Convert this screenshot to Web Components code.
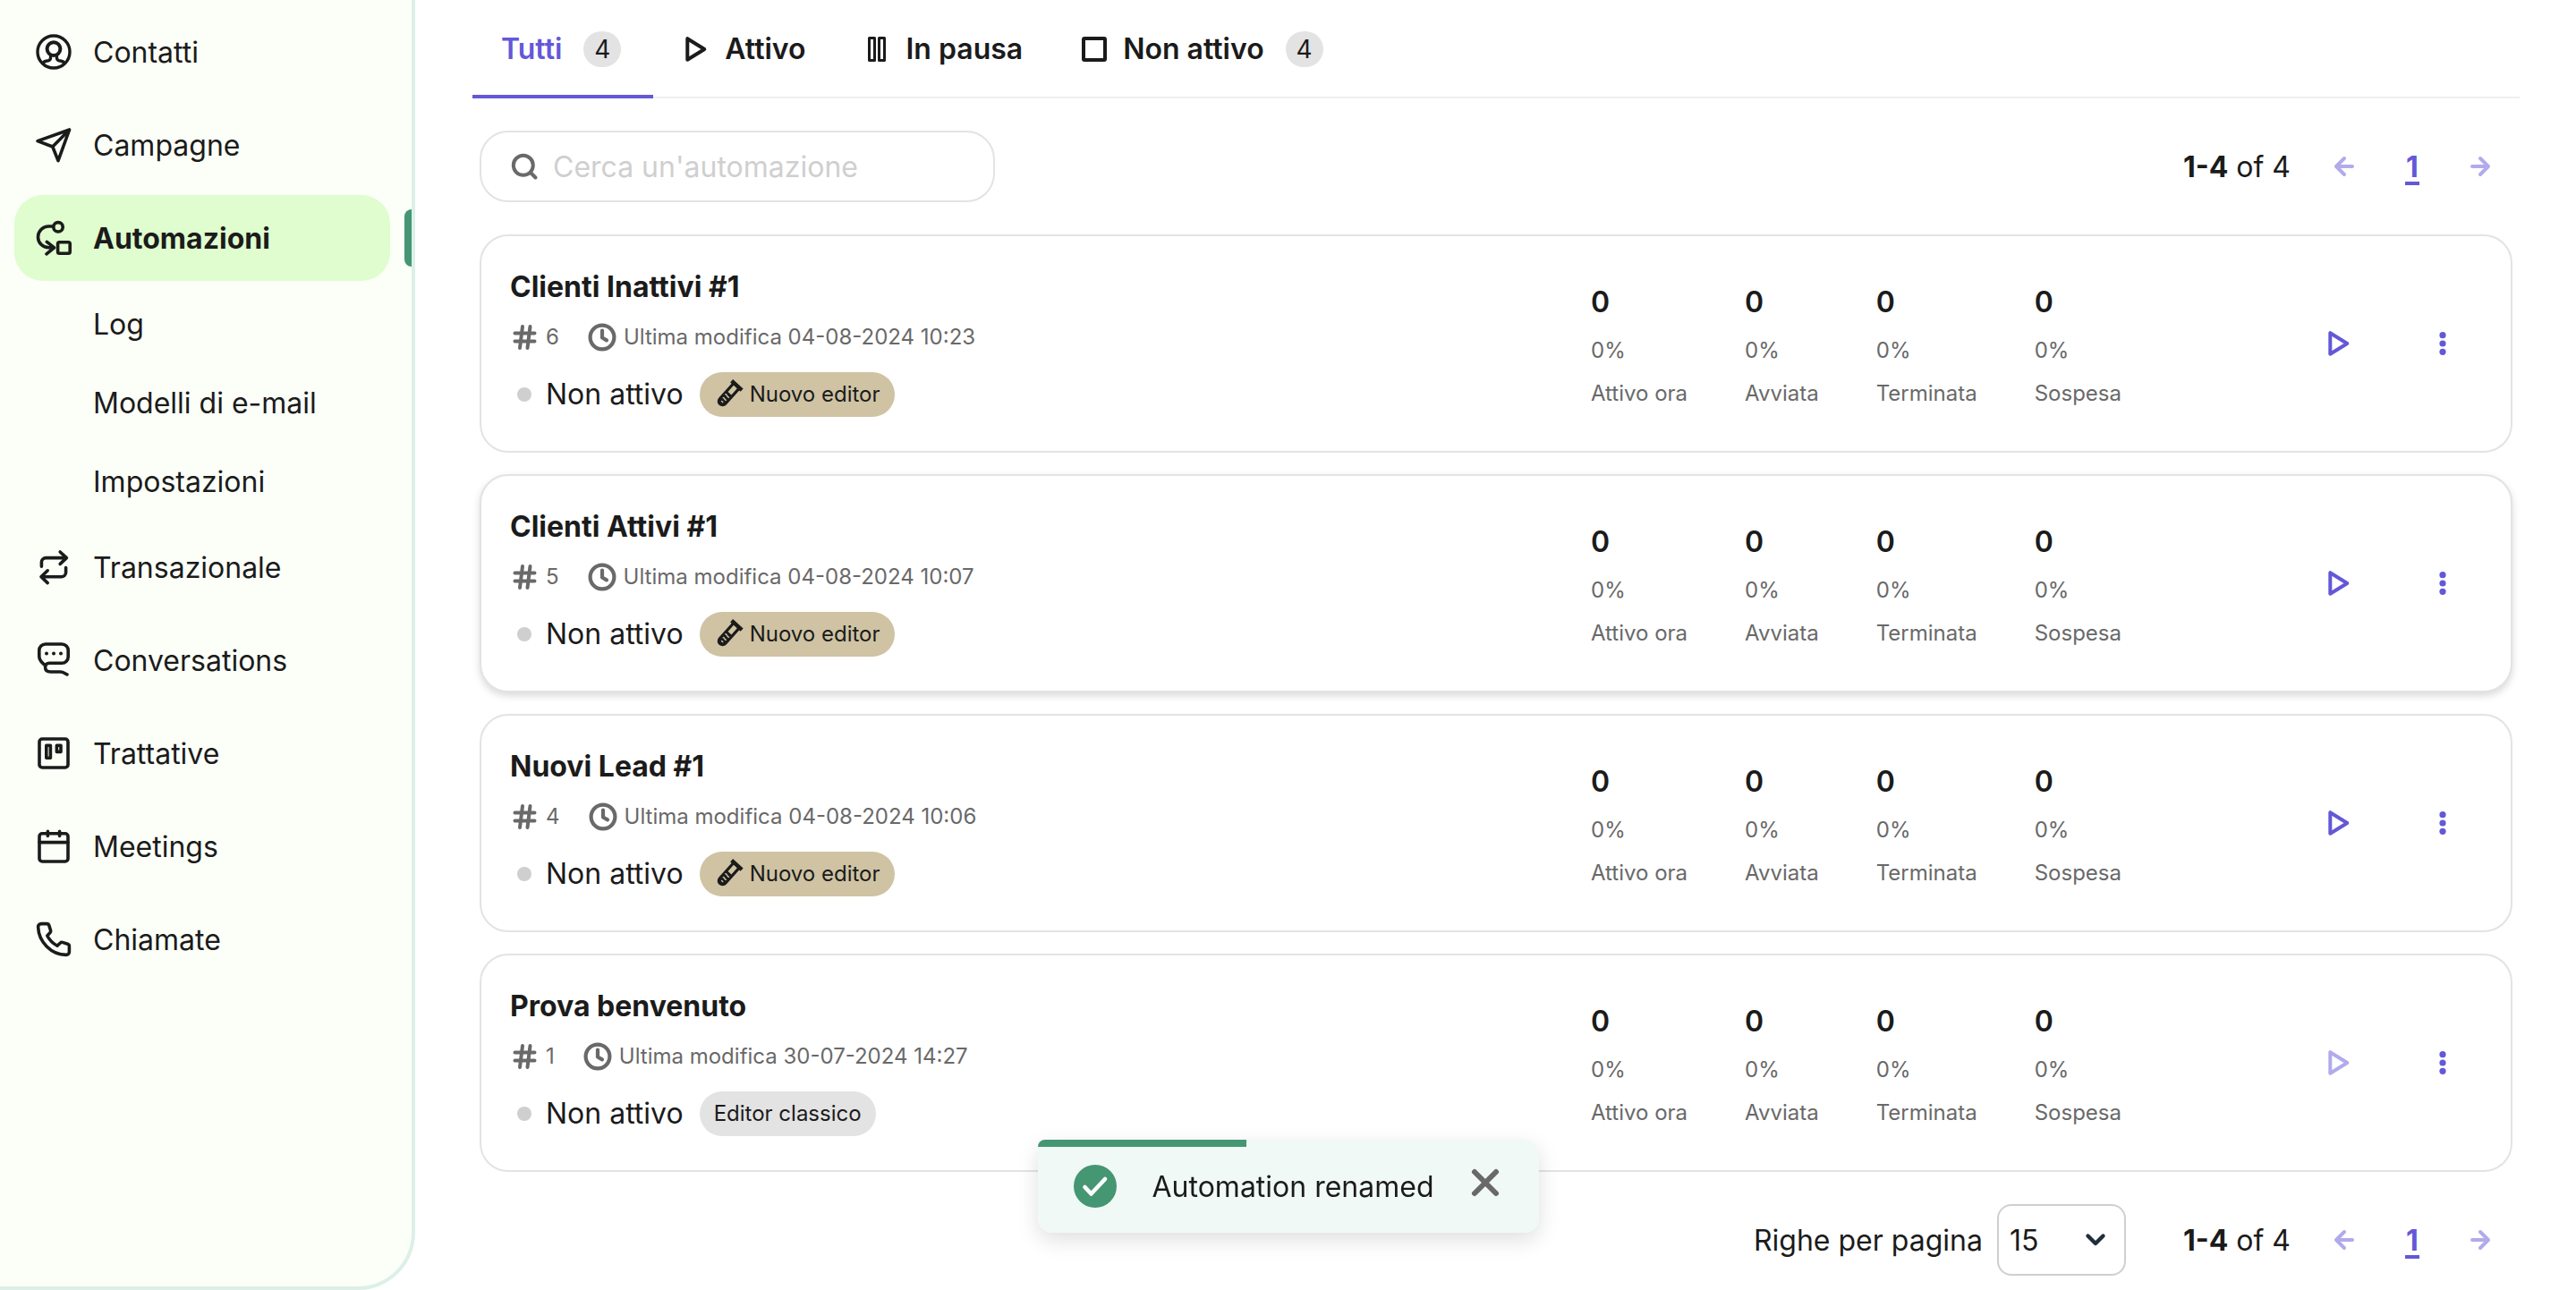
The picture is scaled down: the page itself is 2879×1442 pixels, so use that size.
<!DOCTYPE html>
<html lang="it">
<head>
<meta charset="utf-8">
<title>Automazioni</title>
<style>
  html, body { margin: 0; }
  body { font-family: Inter, "Liberation Sans", sans-serif; font-size: 32px; line-height: 40px; color: #1b1b1b; background: #fff; }
</style>
</head>
<body>
<automation-app></automation-app>
<script>
const ICONS = {
  user: '<g stroke-width="1.7"><circle cx="12" cy="12" r="9"/><circle cx="12" cy="10.3" r="3.7" stroke-width="2"/><path d="M5.9 18.3c1-1.5 2.3-1.1 3.4-1.5 1-.4 1-1 1-2.9M18.1 18.3c-1-1.5-2.3-1.1-3.4-1.5-1-.4-1-1-1-2.9"/></g>',
  send: '<path stroke-width="1.8" d="M3 9.800 20.800 3.500 14.500 20.800 11.400 13zM11.400 13l9.400-9.500"/>',
  flow: '<g stroke-width="1.8"><circle cx="14.5" cy="5.9" r="2.6"/><rect x="14.3" y="14.4" width="6.8" height="6.2" rx=".9"/><path d="M11.6 5.5H9.2a5.95 5.95 0 0 0 0 11.9h3M8.2 14.2l4.100 3.200L8 20.900"/></g>',
  repeat: '<path stroke-width="1.8" d="M5.200 11.600V9.300a2.500 2.500 0 0 1 2.500-2.500H19M15.600 3.500l3.600 3.300-3.600 3.400M18.800 12.300v2.600a2.500 2.500 0 0 1-2.500 2.500H5M8.600 13.900 5 17.400l3.600 3.400"/>',
  chat: '<g stroke-width="1.8"><path d="M7.300 15C5.600 13.200 3.900 12.800 3.900 9.800V6.500A3.500 3.500 0 0 1 7.400 3h9.200a3.500 3.500 0 0 1 3.500 3.500v3.600a3.500 3.500 0 0 1-3.500 3.500H9.600c-1.600 0-2.300.8-2.300 2.400 0 1.600 1 2.500 3 2.500h5.400c1.800 0 2.400.9 3.800 1.500"/><path stroke-width="2" d="M8 8.300h.01M12 8.300h.01M16 8.300h.01"/></g>',
  board: '<g stroke-width="1.8"><rect x="4" y="4" width="16" height="16" rx="1.600"/><rect x="7.900" y="7.600" width="2.300" height="7"/><rect x="13.700" y="7.600" width="2.300" height="3.600"/></g>',
  calendar: '<g stroke-width="1.8"><rect x="4" y="4.900" width="16" height="15.600" rx="1.600"/><path d="M4 9.800h16M8.700 3.600v2.600M15.300 3.600v2.600"/></g>',
  phone: '<path stroke-width="1.8" d="M5 3.300h3.200c.6 0 1 .3 1.200.9l.9 2.900c.1.400 0 .9-.3 1.200L8.400 10c1.300 2.500 3.100 4.300 5.600 5.600l1.700-1.600c.3-.3.800-.4 1.200-.3l2.900.9c.6.200.9.600.9 1.200V19c0 1-.8 1.700-1.700 1.700C10.500 20.500 3.600 13.500 3.300 5c0-.9.800-1.700 1.700-1.700z"/>',
  play: '<path stroke-width="4" d="M6.300 4.200v23.600L25.300 16z"/>',
  pause: '<g stroke-width="3"><rect x="7.500" y="3.500" width="6" height="25"/><rect x="18.500" y="3.500" width="6" height="25"/></g>',
  square: '<rect x="4" y="4" width="24" height="24" rx="1" stroke-width="4"/>',
  search: '<g stroke-width="4"><circle cx="14.800" cy="14.800" r="11"/><path d="m23 23 5.500 5.500"/></g>',
  hash: '<path stroke-width="4" d="M5.500 11.500h22M5.500 20.500h22M14 4l-3 24M22.500 4l-3 24"/>',
  clock: '<g stroke-width="4.200"><circle cx="16" cy="16" r="13.400"/><path d="M16 8.500v8l5 2.800"/></g>',
  left: '<path stroke-width="4" d="M25 16H7M16 7l-9 9 9 9"/>',
  right: '<path stroke-width="4" d="M7 16h18M16 7l9 9-9 9"/>',
  down: '<path stroke-width="4.400" d="m7.500 11.500 8.500 8.500 8.500-8.500"/>',
  dots: '<g fill="currentColor" stroke="none"><circle cx="16" cy="6.700" r="3.600"/><circle cx="16" cy="16" r="3.600"/><circle cx="16" cy="25.300" r="3.600"/></g>',
  close: '<path stroke-width="6" d="m4 4 24 24M28 4 4 28"/>',
  check: '<path stroke-width="4.600" d="M4.500 17l7 7.500L27 8"/>',
  tube: '<g transform="rotate(42 16 16)" stroke="none"><path fill="currentColor" fill-rule="evenodd" d="M8.500 0h15.500v4.500h-2V26a5.700 5.700 0 0 1-11.500 0V4.500h-2zM13.600 4.500V14h5.200V4.500z"/><path fill="none" stroke="#cfc3a3" stroke-width="1.500" d="M13.500 18c1.500-1.500 3 1.500 5 0M14.200 22.500c1.200-1.300 2.400 1.200 4 0M15.500 26.500h1.500"/></g>'
};
const BOX = { user: 24, send: 24, flow: 24, repeat: 24, chat: 24, board: 24, calendar: 24, phone: 24 };

function define(name, css, render) {
  customElements.define(name, class extends HTMLElement {
    connectedCallback() {
      if (this.shadowRoot) return;
      this.attachShadow({ mode: 'open' }).innerHTML =
        '<style>*{box-sizing:border-box}button,input,select{font:inherit;color:inherit}button{background:none;border:0;padding:0;cursor:pointer}' + css + '</style>' + render(this);
    }
  });
}

define('ui-icon',
  ':host{display:inline-flex;flex:none;width:32px;height:32px}svg{width:100%;height:100%;overflow:visible}',
  el => {
    const n = el.getAttribute('name'), b = BOX[n] || 32;
    return `<svg viewBox="0 0 ${b} ${b}" fill="none" stroke="currentColor" stroke-linecap="round" stroke-linejoin="round" aria-hidden="true">${ICONS[n]}</svg>`;
  });

define('nav-item', `
  :host{display:flex;align-items:center;height:96px;position:relative;margin:0 24px 0 16px}
  :host([sub]){height:80px}
  a{display:flex;flex:1;align-items:center;gap:20px;height:100%;padding:0 20px;border-radius:32px;color:inherit;text-decoration:none}
  :host([sub]) a{padding-left:88px}
  ui-icon{width:48px;height:48px}
  .text{padding-top:2px}
  :host([current]) a{background:#dffdce;font-weight:700}
  .mark{display:none;position:absolute;right:-24px;top:16px;bottom:16px;width:8px;border-radius:8px 0 0 8px;background:#459672}
  :host([current]) .mark{display:block}`,
  el => `<a href="#">${el.hasAttribute('icon') ? `<ui-icon name="${el.getAttribute('icon')}"></ui-icon>` : ''}<span class="text"><slot></slot></span></a><span class="mark"></span>`);

define('side-nav', `
  :host{display:block;flex:none;width:464px;background:#fbfff8;border:solid #dcefe8;border-width:0 4px 4px 0;border-bottom-right-radius:64px}
  nav{display:flex;flex-direction:column;gap:8px;padding-top:10px}`,
  () => `<nav aria-label="Menu">
    <nav-item icon="user">Contatti</nav-item>
    <nav-item icon="send">Campagne</nav-item>
    <nav-item icon="flow" current>Automazioni</nav-item>
    <nav-item sub>Log</nav-item>
    <nav-item sub>Modelli di e-mail</nav-item>
    <nav-item sub>Impostazioni</nav-item>
    <nav-item icon="repeat">Transazionale</nav-item>
    <nav-item icon="chat">Conversations</nav-item>
    <nav-item icon="board">Trattative</nav-item>
    <nav-item icon="calendar">Meetings</nav-item>
    <nav-item icon="phone">Chiamate</nav-item>
  </nav>`);

define('status-tab', `
  :host{display:block}
  button{display:flex;align-items:center;gap:16px;height:110px;padding:4px 32px 0;border-bottom:4px solid transparent;font-weight:600}
  :host([selected]) button{color:#6358d8;border-color:#6358d8}
  .count{display:flex;align-items:center;justify-content:center;width:42px;height:40px;margin:0 4px 0 8px;border-radius:20px;background:#e3e3e3;color:#1b1b1b;font-weight:400;font-size:28px}`,
  el => `<button type="button" role="tab" aria-selected="${el.hasAttribute('selected')}">${el.hasAttribute('icon') ? `<ui-icon name="${el.getAttribute('icon')}"></ui-icon>` : ''}<slot></slot>${el.hasAttribute('count') ? `<span class="count">${el.getAttribute('count')}</span>` : ''}</button>`);

define('status-tabs', `
  :host{display:block}
  div{display:flex;box-shadow:inset 0 -2px #efefef}`,
  () => `<div role="tablist">
    <status-tab selected count="4">Tutti</status-tab>
    <status-tab icon="play">Attivo</status-tab>
    <status-tab icon="pause">In pausa</status-tab>
    <status-tab icon="square" count="4">Non attivo</status-tab>
  </div>`);

define('search-box', `
  :host{display:block;width:576px}
  label{display:flex;align-items:center;gap:16px;height:80px;padding:0 32px;border:2px solid #e3e3e3;border-radius:32px}
  ui-icon{color:#696969}
  input{flex:1;min-width:0;border:0;outline:0;padding:2px 0 0;background:none}
  input::placeholder{color:#cfcfcf;opacity:1}`,
  () => `<label><ui-icon name="search"></ui-icon><input type="text" aria-label="Cerca un'automazione" placeholder="Cerca un'automazione"></label>`);

define('page-nav', `
  :host{display:flex;align-items:center;height:80px}
  p{margin:0 24px 0 0;padding-top:2px}
  b{font-weight:700}
  button{display:flex;justify-content:center;width:72px;color:#b1abec}
  a{padding:2px 32px 0;color:#6358d8;font-weight:700;text-decoration:none}
  a span{display:block;width:16px;height:40px;border-bottom:4px solid #6358d8;text-align:center}`,
  () => `<p><b>1-4</b> of 4</p>
    <button type="button" aria-label="Pagina precedente"><ui-icon name="left"></ui-icon></button>
    <a href="#"><span>1</span></a>
    <button type="button" aria-label="Pagina successiva"><ui-icon name="right"></ui-icon></button>`);

define('rows-select', `
  :host{display:flex;align-items:center;gap:16px}
  label{padding-top:2px}
  div{position:relative}
  select{display:block;width:144px;height:80px;padding:2px 12px 0;border:2px solid #cfcfcf;border-radius:16px;background:#fff;appearance:none}
  ui-icon{position:absolute;right:18px;top:24px;color:#1f2d3d;pointer-events:none}`,
  () => `<label for="rows">Righe per pagina</label><div><select id="rows"><option>15</option></select><ui-icon name="down"></ui-icon></div>`);

define('editor-badge', `
  :host{display:inline-flex;align-items:center;gap:8px;height:50px;padding:0 16px;border-radius:25px;background:#e3e3e3;font-size:24px}
  :host([beta]){background:#cfc3a3}`,
  el => (el.hasAttribute('beta') ? '<ui-icon name="tube"></ui-icon>' : '') + '<slot></slot>');

define('stat-cell', `
  :host{display:flex;flex-direction:column;font-size:24px;line-height:48px;color:#696969}
  strong{font-size:32px;line-height:64px;padding-top:2px;margin-bottom:-2px;font-weight:600;color:#1b1b1b}`,
  () => '<strong>0</strong><span>0%</span><slot></slot>');

define('automation-card', `
  :host{display:block}
  article{display:grid;grid-template-columns:minmax(0,1fr) 792px auto;align-items:center;height:244px;padding:0 32px;border:2px solid #e3e3e3;border-radius:32px;background:#fff}
  :host([raised]) article{box-shadow:0 4px 8px rgba(0,0,0,.15)}
  h2{margin:0;font-size:32px;line-height:56px;font-weight:700}
  .info{padding-top:2px}
  .meta{display:flex;align-items:center;gap:8px;height:56px;color:#696969;font-size:24px}
  .meta ui-icon+span+ui-icon{margin-left:24px}
  .state{display:flex;align-items:center;height:72px}
  .dot{width:16px;height:16px;margin:0 16px 0 8px;border-radius:50%;background:#cfcfcf}
  editor-badge{margin-left:18px}
  .stats{display:flex;gap:64px}
  .actions{display:flex;gap:28px}
  button{display:flex;align-items:center;justify-content:center;width:88px;height:80px;color:#6358d8}
  button:disabled{color:#b1abec}`,
  el => {
    const at = n => el.getAttribute(n), classic = el.hasAttribute('classic');
    return `<article>
      <div class="info">
        <h2><slot></slot></h2>
        <div class="meta"><ui-icon name="hash"></ui-icon><span>${at('number')}</span><ui-icon name="clock"></ui-icon><span>Ultima modifica ${at('date')}</span></div>
        <div class="state"><span class="dot"></span><span>Non attivo</span>${classic ? '<editor-badge>Editor classico</editor-badge>' : '<editor-badge beta>Nuovo editor</editor-badge>'}</div>
      </div>
      <div class="stats"><stat-cell>Attivo ora</stat-cell><stat-cell>Avviata</stat-cell><stat-cell>Terminata</stat-cell><stat-cell>Sospesa</stat-cell></div>
      <div class="actions">
        <button type="button" aria-label="Attiva"${classic ? ' disabled' : ''}><ui-icon name="play"></ui-icon></button>
        <button type="button" aria-label="Altre azioni"><ui-icon name="dots"></ui-icon></button>
      </div>
    </article>`;
  });

define('toast-message', `
  :host{position:fixed;left:50%;bottom:64px;transform:translateX(-50%);display:block;border-radius:16px;box-shadow:0 8px 24px rgba(0,0,0,.13)}
  div{display:flex;align-items:center;width:560px;height:104px;padding:0 44px 0 40px;border-radius:8px 16px 16px 16px;overflow:hidden;background:linear-gradient(#459672,#459672) 0 0/233px 8px no-repeat #f0f9f6}
  .ok{display:flex;align-items:center;justify-content:center;width:48px;height:48px;margin-right:40px;border-radius:50%;background:#459672;color:#fff}
  p{flex:1;margin:0;padding-top:2px}
  button{display:flex;color:#696969;margin-bottom:8px}`,
  () => `<div role="status"><span class="ok"><ui-icon name="check"></ui-icon></span><p><slot></slot></p><button type="button" aria-label="Chiudi"><ui-icon name="close"></ui-icon></button></div>`);

define('automation-app', `
  :host{display:flex;min-height:100vh}
  main{flex:1;min-width:0;padding:0 63px 16px 64px}
  .body{display:flex;flex-direction:column;gap:36px;padding:36px 8px 0}
  .bar{display:flex;align-items:center;justify-content:space-between}
  .bar.end{justify-content:flex-end;gap:64px}
  .list{display:flex;flex-direction:column;gap:24px}`,
  () => `<side-nav></side-nav>
  <main>
    <status-tabs></status-tabs>
    <div class="body">
      <div class="bar"><search-box></search-box><page-nav></page-nav></div>
      <div class="list">
        <automation-card number="6" date="04-08-2024 10:23">Clienti Inattivi #1</automation-card>
        <automation-card number="5" date="04-08-2024 10:07" raised>Clienti Attivi #1</automation-card>
        <automation-card number="4" date="04-08-2024 10:06">Nuovi Lead #1</automation-card>
        <automation-card number="1" date="30-07-2024 14:27" classic>Prova benvenuto</automation-card>
      </div>
      <div class="bar end"><rows-select></rows-select><page-nav></page-nav></div>
    </div>
  </main>
  <toast-message>Automation renamed</toast-message>`);
</script>
</body>
</html>
